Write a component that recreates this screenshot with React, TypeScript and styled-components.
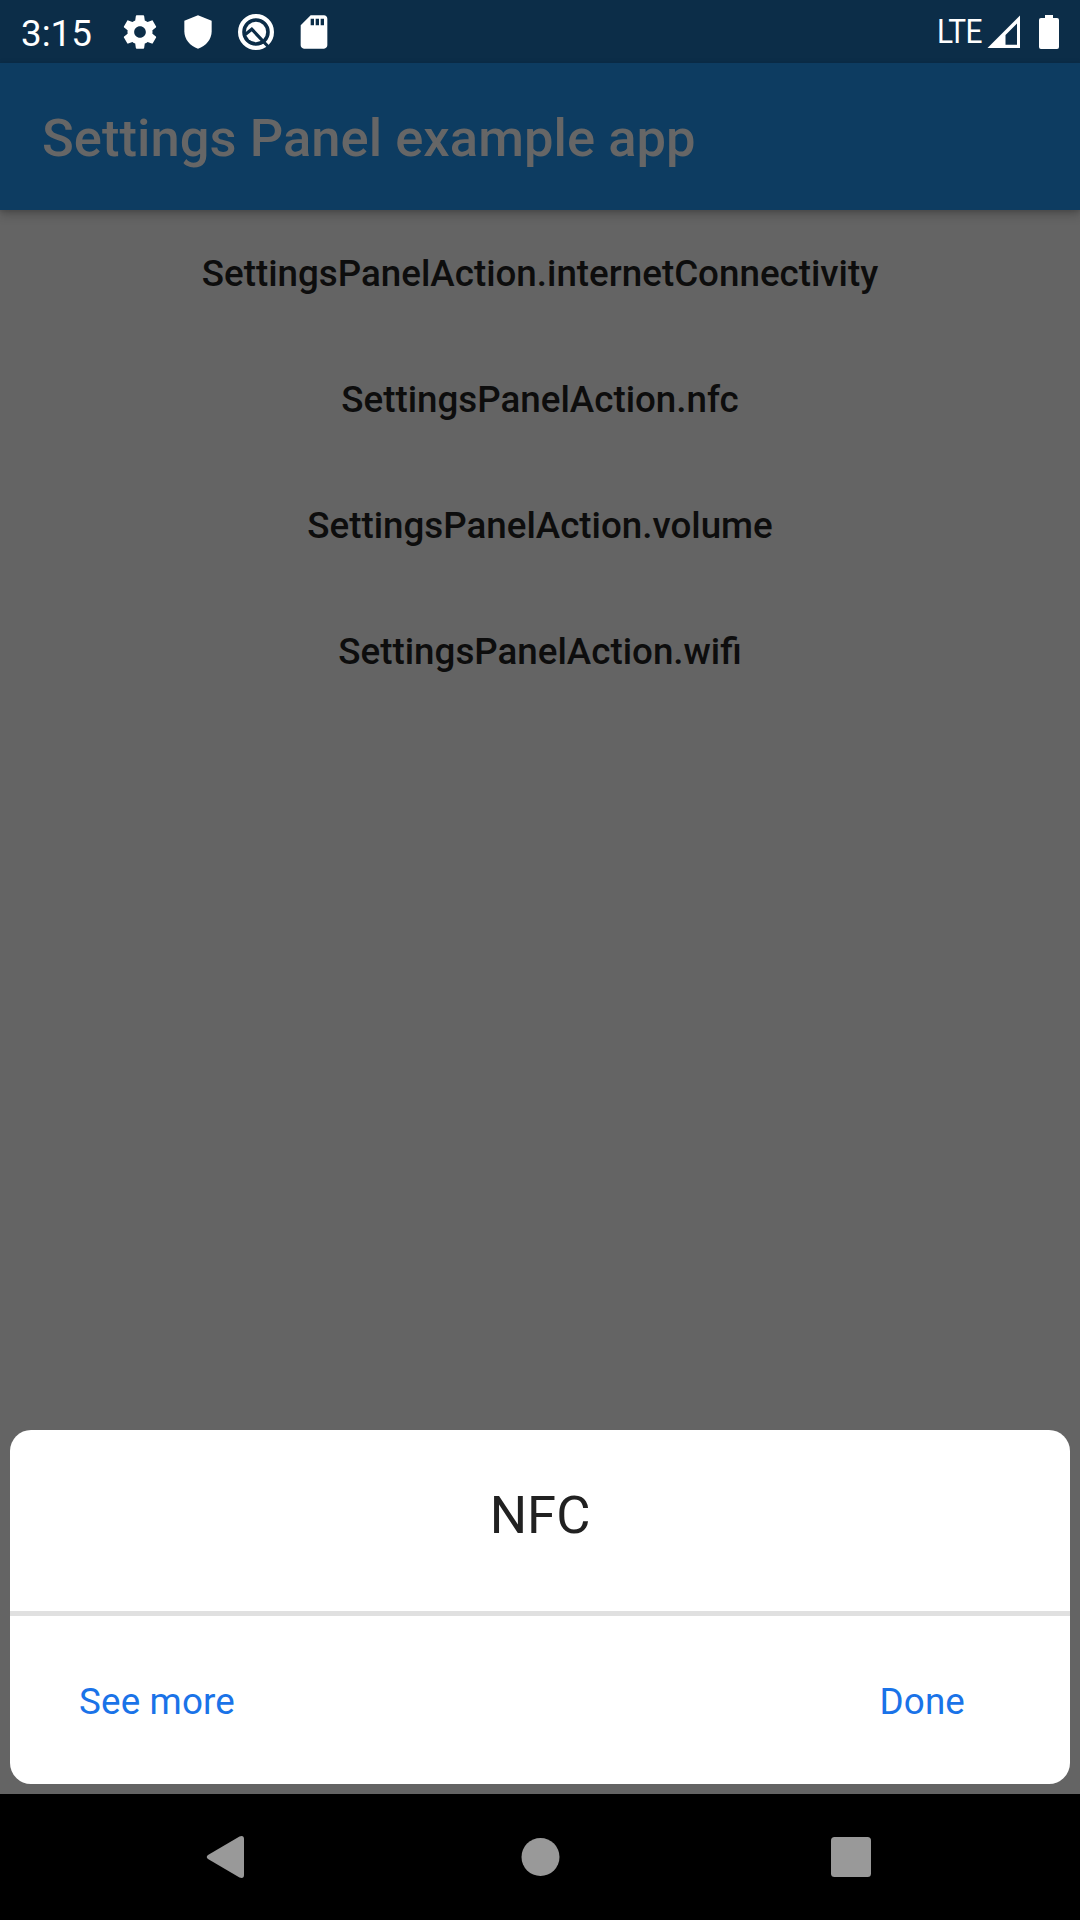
import React from 'react';
import styled, { createGlobalStyle } from 'styled-components';

const GlobalStyle = createGlobalStyle`
  * { box-sizing: border-box; }
  body { margin: 0; background: #646464; font-family: Roboto, "Liberation Sans", sans-serif; }
  button { border: 0; padding: 0; background: none; font-family: inherit; }
`;

const Screen = styled.div`
  width: 1080px;
  height: 1920px;
  display: flex;
  flex-direction: column;
  background: #646464;
  overflow: hidden;
`;

const StatusBar = styled.header`
  height: 63px;
  flex: none;
  display: flex;
  align-items: center;
  padding: 0 20px 0 21px;
  background: #0c2d48;
  color: #fff;
`;

const Clock = styled.span`
  width: 99px;
  line-height: 44px;
  font-size: 36.75px;
  padding-top: 4px;
`;

const Notifications = styled.div`
  display: flex;
  flex: 1;
  gap: 18px;
`;

const StatusIcon = styled.svg`
  width: 40px;
  height: 40px;
  display: block;
  fill: #fff;
`;

const Network = styled.span`
  font-size: 32.5px;
  line-height: 40px;
  margin-right: 5px;
  letter-spacing: -0.7px;
  transform: scaleX(0.92);
  transform-origin: right center;
`;

const SignalIcon = styled.svg`
  width: 34px;
  height: 34px;
  margin-right: 18px;
  fill: #fff;
`;

const BatteryIcon = styled.svg`
  width: 20px;
  height: 34px;
  margin-right: 1px;
  fill: #fff;
`;

const AppBar = styled.div`
  height: 147px;
  flex: none;
  display: flex;
  align-items: center;
  padding-left: 42px;
  background: #0d3c61;
  box-shadow: 0 5px 10px rgba(0, 0, 0, 0.2), 0 2px 4px rgba(0, 0, 0, 0.12);
`;

const Title = styled.h1`
  margin: 0;
  padding-top: 3px;
  font-size: 52.5px;
  line-height: 62px;
  letter-spacing: 0.04px;
  font-weight: 500;
  color: #666;
`;

const Actions = styled.main`
  flex: 1;
  display: flex;
  flex-direction: column;
  align-items: center;
`;

const ActionButton = styled.button`
  height: 126px;
  font-size: 36.75px;
  font-weight: 500;
  color: #0d0d0d;
`;

const Panel = styled.section`
  height: 354px;
  flex: none;
  margin: 0 10px 10px;
  border-radius: 21px;
  background: #fff;
  overflow: hidden;
`;

const PanelTitle = styled.h2`
  height: 181px;
  margin: 0;
  padding-top: 54px;
  text-align: center;
  font-size: 52.5px;
  line-height: 62px;
  font-weight: 400;
  color: #212121;
`;

const Divider = styled.div`
  height: 5px;
  background: #e0e0e0;
`;

const PanelFooter = styled.div`
  height: 168px;
  display: flex;
  align-items: center;
  justify-content: space-between;
  padding: 4px 105px 0 69px;
`;

const PanelButton = styled.button`
  font-size: 36.75px;
  line-height: 44px;
  letter-spacing: 0.16px;
  color: #1a73e8;
`;

const NavBar = styled.nav`
  height: 126px;
  flex: none;
  display: flex;
  align-items: center;
  justify-content: space-between;
  padding: 0 206px;
  background: #000;
`;

const NavButton = styled.button`
  width: 46px;
  height: 126px;
  display: flex;
  align-items: center;
`;

const NavIcon = styled.svg<{ $w: number; $h: number; $left?: number }>`
  width: ${(p) => p.$w}px;
  height: ${(p) => p.$h}px;
  margin-left: ${(p) => p.$left ?? 0}px;
  fill: #999;
`;

const actions = ['internetConnectivity', 'nfc', 'volume', 'wifi'];

export default function App() {
  return (
    <Screen>
      <GlobalStyle />
      <StatusBar>
        <Clock>3:15</Clock>
        <Notifications>
          <StatusIcon viewBox="0 0 24 24">
            <path d="M19.43 12.98c.04-.32.07-.64.07-.98s-.03-.66-.07-.98l2.11-1.65c.19-.15.24-.42.12-.64l-2-3.46c-.12-.22-.39-.3-.61-.22l-2.49 1c-.52-.4-1.08-.73-1.69-.98l-.38-2.65C14.46 2.18 14.25 2 14 2h-4c-.25 0-.46.18-.49.42l-.38 2.65c-.61.25-1.17.59-1.69.98l-2.49-1c-.23-.09-.49 0-.61.22l-2 3.46c-.13.22-.07.49.12.64l2.11 1.65c-.04.32-.07.65-.07.98s.03.66.07.98l-2.11 1.65c-.19.15-.24.42-.12.64l2 3.46c.12.22.39.3.61.22l2.49-1c.52.4 1.08.73 1.69.98l.38 2.65c.03.24.24.42.49.42h4c.25 0 .46-.18.49-.42l.38-2.65c.61-.25 1.17-.59 1.69-.98l2.49 1c.23.09.49 0 .61-.22l2-3.46c.12-.22.07-.49-.12-.64l-2.11-1.65zM12 15.5c-1.93 0-3.5-1.57-3.5-3.5s1.57-3.5 3.5-3.5 3.5 1.57 3.5 3.5-1.57 3.5-3.5 3.5z" />
          </StatusIcon>
          <StatusIcon viewBox="0 0 24 24">
            <path d="M12 2 20.2 5.3V11.6C20.2 16.4 16.7 20.7 12 22 7.3 20.7 3.8 16.4 3.8 11.6V5.3Z" />
          </StatusIcon>
          <StatusIcon viewBox="0 0 40 40">
            <circle cx="20" cy="20" r="15.9" fill="none" stroke="#fff" strokeWidth="4.2" />
            <circle cx="20" cy="20" r="10.2" />
            <path d="M9.5 22.2 15.8 17.2 33 35.5" fill="none" stroke="#0c2d48" strokeWidth="3.2" />
          </StatusIcon>
          <StatusIcon viewBox="0 0 24 24">
            <path d="M18 2h-8L4.02 8 4 20c0 1.1.9 2 2 2h12c1.1 0 2-.9 2-2V4c0-1.1-.9-2-2-2zm-6 6h-2V4h2v4zm3 0h-2V4h2v4zm3 0h-2V4h2v4z" />
          </StatusIcon>
        </Notifications>
        <Network>LTE</Network>
        <SignalIcon viewBox="0 0 34 34">
          <path fillRule="evenodd" d="M0.5 33 33 0.5V33ZM18.5 20V29.8H30V8.5Z" />
        </SignalIcon>
        <BatteryIcon viewBox="0 0 20 34">
          <path d="M6 0h8v3h4a2 2 0 0 1 2 2v27a2 2 0 0 1-2 2H2a2 2 0 0 1-2-2V5a2 2 0 0 1 2-2h4Z" />
        </BatteryIcon>
      </StatusBar>
      <AppBar>
        <Title>Settings Panel example app</Title>
      </AppBar>
      <Actions>
        {actions.map((a) => (
          <ActionButton key={a}>SettingsPanelAction.{a}</ActionButton>
        ))}
      </Actions>
      <Panel>
        <PanelTitle>NFC</PanelTitle>
        <Divider />
        <PanelFooter>
          <PanelButton>See more</PanelButton>
          <PanelButton>Done</PanelButton>
        </PanelFooter>
      </Panel>
      <NavBar>
        <NavButton aria-label="Back">
          <NavIcon $w={38} $h={42} viewBox="0 0 38 42">
            <path d="M2 19 33.5.5Q38-1 38 3V39Q38 43 33.5 41.5L2 23Q-.5 21 2 19Z" />
          </NavIcon>
        </NavButton>
        <NavButton aria-label="Home">
          <NavIcon $w={39} $h={39} $left={3.5} viewBox="0 0 39 39">
            <circle cx="19.5" cy="19" r="19" />
          </NavIcon>
        </NavButton>
        <NavButton aria-label="Overview">
          <NavIcon $w={40} $h={40} $left={3} viewBox="0 0 40 40">
            <rect width="40" height="40" rx="3.5" />
          </NavIcon>
        </NavButton>
      </NavBar>
    </Screen>
  );
}
